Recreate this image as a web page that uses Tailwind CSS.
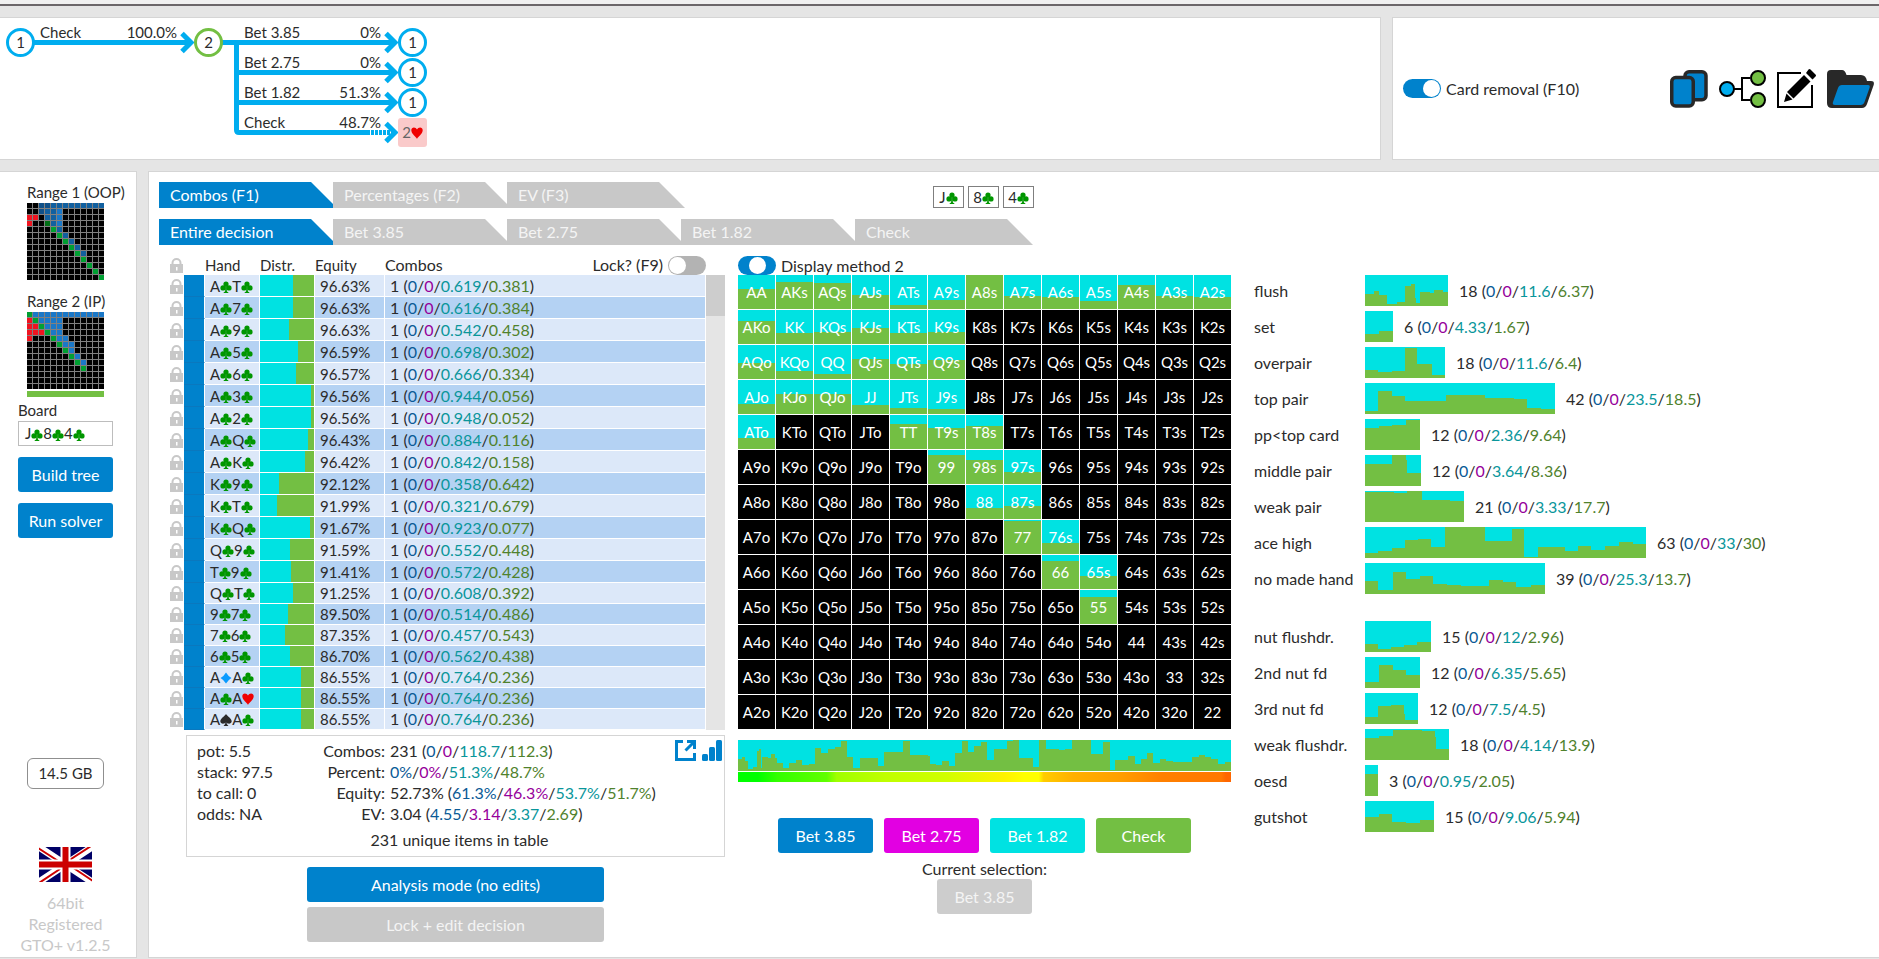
<!DOCTYPE html>
<html lang="en">
<head>
<meta charset="utf-8">
<title>GTO+</title>
<script src="https://cdn.jsdelivr.net/npm/@tailwindcss/browser@4"></script>
</head>
<body class="bg-[#e5e5e5] font-['Lato','Open_Sans',sans-serif] text-[16px] leading-[21px] text-[#2b2b2b]">
<svg class="hidden">
  <symbol id="c" viewBox="0 0 12 12"><g fill="#009600"><circle cx="6" cy="3" r="2.600"/><circle cx="3" cy="6.900" r="2.600"/><circle cx="9" cy="6.900" r="2.600"/><path d="M5.200 4h1.600v5.500c0 1 .6 1.600 1.600 1.900V12H3.600v-.6c1-.3 1.600-.9 1.600-1.900z"/></g></symbol>
  <symbol id="s" viewBox="0 0 12 12"><g fill="#2b2b2b"><path d="M6 0C7 2 11.700 4.500 11.700 7.200 11.700 10 7.800 10.400 6.600 8.500c0 1.500.6 2.500 1.600 2.900v.6H3.800v-.6c1-.4 1.600-1.400 1.600-2.900C4.200 10.400.3 10 .3 7.200.3 4.500 5 2 6 0z"/></g></symbol>
  <symbol id="h" viewBox="0 0 12 12"><path fill="#f00000" d="M6 12C5.200 9.500.3 7 .3 3.200.3-.3 4.800-.5 6 2.600 7.200-.5 11.700-.3 11.700 3.200 11.700 7 6.800 9.500 6 12z"/></symbol>
  <symbol id="d" viewBox="0 0 12 12"><path fill="#0a9bff" d="M6 .5Q8 4 11.500 6 8 8 6 11.500 4 8 .5 6 4 4 6 .5z"/></symbol>
  <symbol id="lock" viewBox="0 0 13 15"><path d="M2.500 7V5a4 4 0 0 1 8 0v2" fill="none" stroke="#c8c8c8" stroke-width="2"/><rect y="6" width="13" height="9" fill="#c8c8c8"/><path d="M6 9h1.500v3.500H6z" fill="#fff"/></symbol>
</svg>

<div class="flex min-h-screen flex-col">
  <div class="h-[6px] border-b-2 border-[#6b6669] bg-[#f0f0f0]"></div>

  <div class="mt-[11px] flex gap-[11px]">
    <section class="min-w-0 flex-1 border border-l-0 border-[#d5d5d5] bg-white" aria-label="Game tree">
      <svg width="440" height="141" viewBox="0 18 440 141" class="block text-[15px]" fill="#2b2b2b">
        <g fill="none" stroke="#00adef" stroke-width="5">
          <path d="M34 42.500H191M222 42.500H395M236.500 42.500V130q0 2.500 2.500 2.500H367M236.500 72.500H395M236.500 102.500H395"/>
          <path d="M367 132.500H395" stroke-dasharray="3 1"/>
          <path d="M182 33.500l9 9-9 9M386 33.500l9 9-9 9M386 63.500l9 9-9 9M386 93.500l9 9-9 9M386 123.500l9 9-9 9"/>
        </g>
        <g fill="#fff" stroke="#00adef" stroke-width="3">
          <circle cx="20.500" cy="42.500" r="13"/><circle cx="208.500" cy="42.500" r="13" stroke="#73bf43"/>
          <circle cx="412.500" cy="42.500" r="13"/><circle cx="412.500" cy="72.500" r="13"/><circle cx="412.500" cy="102.500" r="13"/>
        </g>
        <rect x="398" y="118" width="29" height="29" rx="3" fill="#facaca"/>
        <use href="#h" x="411" y="127" width="12" height="12"/>
        <g text-anchor="middle"><text x="20.500" y="48">1</text><text x="208.500" y="48">2</text><text x="412.500" y="48">1</text><text x="412.500" y="78">1</text><text x="412.500" y="108">1</text><text x="406.500" y="138" fill="#666">2</text></g>
        <text x="40" y="38">Check</text><text x="244" y="38">Bet 3.85</text><text x="244" y="68">Bet 2.75</text><text x="244" y="98">Bet 1.82</text><text x="244" y="128">Check</text>
        <g text-anchor="end"><text x="177" y="38">100.0%</text><text x="381" y="38">0%</text><text x="381" y="68">0%</text><text x="381" y="98">51.3%</text><text x="381" y="128">48.7%</text></g>
      </svg>
    </section>
    <section class="flex w-[487px] shrink-0 items-center border border-r-0 border-[#d5d5d5] bg-white pl-[10px]" aria-label="Tools">
      <label class="flex flex-1 items-center gap-[5px]"><input type="checkbox" checked class="flex h-[19px] w-[38px] appearance-none items-center justify-end rounded-full bg-[#0082cc] p-px before:size-[17px] before:rounded-full before:bg-white before:content-['']">Card removal (F10)</label>
      <div class="flex items-center gap-[11px] pr-[5px]">
        <button aria-label="Cards"><svg class="block" width="38" height="38" fill="#0082cc" stroke="#282828" stroke-width="3.500"><rect x="15" y="1.750" width="21" height="28" rx="4"/><rect x="1.750" y="7.500" width="21.500" height="28.500" rx="4"/></svg></button>
        <button aria-label="Tree"><svg class="block" width="47" height="38" fill="none" stroke="#000" stroke-width="2"><path d="M15 19h8M31 8H23v22h8"/><circle cx="8" cy="19" r="7" fill="#00adef"/><circle cx="39" cy="8" r="7" fill="#73bf43"/><circle cx="39" cy="30" r="7" fill="#73bf43"/></svg></button>
        <button aria-label="Edit"><svg class="block" width="39" height="39"><path d="M24 4H1v34h34V16" fill="none" stroke="#000" stroke-width="2"/><path d="M10 23L27 6l6.500 6.500-17 17zM29 4l2.500-3.500q1-1 2 0l5 5q1 1 0 2L35.500 10.500zM9.500 24.500l6 6L7 33z"/></svg></button>
        <button aria-label="Open"><svg class="block" width="47" height="38"><path d="M4 0h11q3 0 4.500 5H34q5 0 6 6h4q4 0 2.500 4.500L40 34q-1.500 4-5 4H5q-5 0-5-5V4q0-4 4-4z" fill="#282828"/><path d="M15 15h26q2.500 0 1.500 3l-5 14q-1 3-4 3H8q-3 0-2-3l5-14q1-3 4-3z" fill="#0082cc"/></svg></button>
      </div>
    </section>
  </div>

  <div class="mt-[11px] mb-px flex flex-1 gap-[11px]">
    <aside class="flex w-[137px] shrink-0 flex-col border border-l-0 border-[#d5d5d5] bg-white pt-[10px] pb-[2px]">
      <div class="pl-[27px] text-[15px] whitespace-nowrap">Range 1 (OOP)</div>
      <svg id="r1" class="ml-[27px]" width="77" height="77"></svg>
      <div class="mt-[11px] pl-[27px] text-[15px] whitespace-nowrap">Range 2 (IP)</div>
      <svg id="r2" class="ml-[27px]" width="77" height="77"></svg>
      <div class="mt-[2px] ml-[27px] h-[6px] w-[77px] bg-[#73bf43]"></div>
      <div class="mt-[3px] pl-[18px] text-[15px]">Board</div>
      <button id="board" class="ml-[18px] flex h-[25px] w-[95px] items-center border border-[#bdbdbd] bg-white pl-[6px] text-[15px]" aria-label="Board cards"></button>
      <button class="mt-[11px] ml-[18px] h-[35px] w-[95px] rounded-[3px] bg-[#0082cc] text-white">Build tree</button>
      <button class="mt-[11px] ml-[18px] h-[35px] w-[95px] rounded-[3px] bg-[#0082cc] text-white">Run solver</button>
      <div class="mt-auto mb-[58px] ml-[27px] flex h-[31px] w-[77px] items-center justify-center rounded-[6px] border border-[#8f8f8f] text-[15px]">14.5 GB</div>
      <svg class="ml-[39px]" width="53" height="35" viewBox="0 0 53 35"><rect width="53" height="35" fill="#006"/><path d="M0 0l53 35M53 0L0 35" stroke="#fff" stroke-width="7"/><path d="M-1 1l28 18M54 34L27 16M52-1L26 16M0 36l27-18" stroke="#c00" stroke-width="2"/><path d="M26.500 0v35M0 17.500h53" stroke="#fff" stroke-width="10"/><path d="M26.500 0v35M0 17.500h53" stroke="#c00" stroke-width="6"/></svg>
      <div class="mt-[10px] pr-[5px] text-center text-[#c8c8c8]">64bit<br>Registered<br>GTO+ v1.2.5</div>
    </aside>

    <main class="min-w-0 flex-1 border border-r-0 border-[#d5d5d5] bg-white pt-[10px] pl-[10px]">
      <div class="flex">
        <nav id="tabs1" class="flex"></nav>
        <div id="flop" class="ml-[252px] flex items-end gap-[4px] text-[15px]"></div>
      </div>
      <nav id="tabs2" class="mt-[11px] flex"></nav>

      <div class="mt-[10px] flex">
        <div class="w-[566px] shrink-0">
          <div class="flex">
            <table class="w-[547px] table-fixed border-separate border-spacing-0">
              <colgroup><col class="w-[25px]"><col class="w-[21px]"><col class="w-[55px]"><col class="w-[55px]"><col class="w-[70px]"><col></colgroup>
              <thead><tr class="h-[20px] text-left text-[15px] leading-[20px] [&>th]:p-0 [&>th]:font-normal">
                <th><svg class="ml-[11px]" width="13" height="15"><use href="#lock"/></svg></th><th></th><th>Hand</th><th>Distr.</th><th>Equity</th>
                <th><div class="flex items-center"><span class="flex-1 text-[16px]">Combos</span><label class="flex items-center gap-[5px] text-[16px]">Lock? (F9)<input type="checkbox" class="flex h-[19px] w-[38px] appearance-none items-center rounded-full bg-[#b3b3b3] p-px before:size-[17px] before:rounded-full before:bg-white before:content-['']"></label></div></th>
              </tr></thead>
              <tbody id="rows" class="leading-[20px] [&_td]:p-0"></tbody>
            </table>
            <div class="mt-[20px] flex-1 bg-[#e5e5e5]"><div class="h-[41px] bg-[#cdcdcd]"></div></div>
          </div>
          <section class="mt-[5px] ml-[27px] border border-[#d5d5d5] pt-[4px] pr-[2px] pb-[6px] pl-[10px]">
            <div class="flex">
              <div class="w-[100px]">pot: 5.5<br>stack: 97.5<br>to call: 0<br>odds: NA</div>
              <div class="w-[88px] text-right">Combos:<br>Percent:<br>Equity:<br>EV:</div>
              <div id="totals" class="flex-1 pl-[5px]"></div>
              <div class="flex gap-[6px]">
                <button class="self-start" aria-label="Pop out"><svg class="block" width="21" height="21" fill="none" stroke="#0082cc" stroke-width="3"><path d="M8 1.500H1.500v18h18V13M10.500 10.500L18 3M12 1.500h7.500V9"/></svg></button>
                <button class="self-start" aria-label="Chart"><svg class="block" width="20" height="21" fill="#0082cc"><rect y="14" width="6" height="7" rx="1.500"/><rect x="7" y="7" width="6" height="14" rx="1.500"/><rect x="14" width="6" height="21" rx="1.500"/></svg></button>
              </div>
            </div>
            <p class="mt-[5px] text-center">231 unique items in table</p>
          </section>
          <div class="mt-[10px] ml-[148px] flex w-[297px] flex-col gap-[5px]">
            <button class="h-[35px] rounded-[3px] bg-[#0082cc] text-white">Analysis mode (no edits)</button>
            <button class="h-[35px] rounded-[3px] bg-[#c8c8c8] text-[#f4f4f4]">Lock + edit decision</button>
          </div>
        </div>

        <div class="ml-[13px] w-[494px] shrink-0">
          <label class="flex h-[20px] items-center gap-[5px]"><input type="checkbox" checked class="flex h-[19px] w-[38px] appearance-none items-center justify-center rounded-full bg-[#0082cc] before:size-[17px] before:rounded-full before:bg-white before:content-['']">Display method 2</label>
          <table id="matrix" class="w-[494px] table-fixed border-separate border-spacing-0 text-center text-[15px] leading-[32px] text-white"></table>
          <svg id="strip" class="mt-[10px] block" width="493" height="31" viewBox="0 0 1479 93" preserveAspectRatio="none" shape-rendering="crispEdges"></svg>
          <div class="mt-px h-[10px] w-[493px] bg-[linear-gradient(90deg,#0f0_4%,#3f0_8%,#60ff00_18%,#a0ff00_20%,#c0ff00_30%,#d0ff00_42%,#fff200_54%,#ff0_58%,#ff0_61%,#ffcc00_62%,#ffb000_68%,#ffa000_77%,#ff8000_86%,#ff7800_98%,#f60_99%)]"></div>
          <div class="mt-[36px] mr-px flex justify-center gap-[11px] text-white">
            <button class="h-[35px] w-[95px] rounded-[3px] bg-[#0082cc]">Bet 3.85</button>
            <button class="h-[35px] w-[95px] rounded-[3px] bg-[#e200e2]">Bet 2.75</button>
            <button class="h-[35px] w-[95px] rounded-[3px] bg-[#00e2e2]">Bet 1.82</button>
            <button class="h-[35px] w-[95px] rounded-[3px] bg-[#73bf43]">Check</button>
          </div>
          <p class="mt-[5px] mr-px text-center">Current selection:</p>
          <div class="mr-px flex justify-center"><button class="h-[35px] w-[95px] rounded-[3px] bg-[#cdcdcd] text-[#f4f4f4]">Bet 3.85</button></div>
        </div>

        <div id="cats" class="ml-[22px] min-w-0 flex-1 pt-[20px]"></div>
      </div>
    </main>
  </div>
</div>

<script>
const $ = id => document.getElementById(id);
const cards = t => t.replace(/([AKQJT0-9])([cshd])/g, '$1<svg class="mt-[2px] inline-block shrink-0 align-[-1px]" width="12" height="12"><use href="#$2"/></svg>');
const CLS = ['text-[#0a5a96]', 'text-[#96009b]', 'text-[#0a969b]', 'text-[#50822d]'];
const split = v => v.split('/').map((n, i) => `<span class="${CLS[i]}">${n}</span>`).join('/');

const palette = {m:'#1160a0', n:'#0f5088', b:'#1a78c8', r:'#f01420', g:'#00a032', k:'#006e14', '.':'#000'};
const range = (id, rows) => {
  let s = '<rect width="77" height="77" fill="#808080"/>';
  rows.forEach((r, y) => [...r.padEnd(13, '.')].forEach((c, x) => s += `<rect x="${x*6}" y="${y*6}" width="5" height="5" fill="${palette[c]}"/>`));
  $(id).innerHTML = s;
};
range('r1', ['..nnmmmmmmmmm','..nmmb','rr.mmb','r..kmb','....gm','.....gm','......gm','.......gm','........gm','.........g','..........g','...........g','............g']);
range('r2', ['gbbbbbbbbbbbb','rgbbbb','rrgbbb','rrrgbb','r...gbb','.....gbb','......gb','.......gb','........gb','.........g','','','']);

$('board').innerHTML = cards('Jc8c4c');
$('flop').innerHTML = ['Jc','8c','4c'].map(c => `<div class="flex h-[22px] w-[31px] items-center justify-center border border-[#7f7f7f]">${cards(c)}</div>`).join('');

const tabs = (id, list) => $(id).innerHTML = list.map((t, i) => `<a href="#" class="mr-[-4px] flex h-[26px] w-[178px] items-center pb-px pl-[11px] [clip-path:polygon(0_0,152px_0,100%_100%,0_100%)] ${i ? 'bg-[#c8c8c8] text-[#f4f4f4]' : 'relative bg-[#0082cc] text-white'}">${t}</a>`).join('');
tabs('tabs1', ['Combos (F1)', 'Percentages (F2)', 'EV (F3)']);
tabs('tabs2', ['Entire decision', 'Bet 3.85', 'Bet 2.75', 'Bet 1.82', 'Check']);

const hands = `AcTc 96.63 .619 .381
Ac7c 96.63 .616 .384
Ac9c 96.63 .542 .458
Ac5c 96.59 .698 .302
Ac6c 96.57 .666 .334
Ac3c 96.56 .944 .056
Ac2c 96.56 .948 .052
AcQc 96.43 .884 .116
AcKc 96.42 .842 .158
Kc9c 92.12 .358 .642
KcTc 91.99 .321 .679
KcQc 91.67 .923 .077
Qc9c 91.59 .552 .448
Tc9c 91.41 .572 .428
QcTc 91.25 .608 .392
9c7c 89.50 .514 .486
7c6c 87.35 .457 .543
6c5c 86.70 .562 .438
AdAc 86.55 .764 .236
AcAh 86.55 .764 .236
AsAc 86.55 .764 .236`.split('\n').map(l => l.split(' '));
$('rows').innerHTML = hands.map(([h, e, a, b], i) => {
  const bg = (i % 2 ? 'bg-[#b4d2f3]' : 'bg-[#dce8f9]') + ' border-b border-r border-white';
  return `<tr class="${i < 14 ? 'h-[22px]' : 'h-[21px]'}">
  <td><svg class="ml-[11px] block" width="13" height="15"><use href="#lock"/></svg></td>
  <td class="border-r border-b border-r-white border-b-[#0a78be] bg-[#0082cc]"></td>
  <td class="${bg} text-[15px]"><div class="flex items-center pl-[5px]">${cards(h)}</div></td>
  <td class="border-r border-b border-white bg-clip-padding bg-no-repeat" style="background-image:linear-gradient(90deg,#00e2e2 ${a*100}%,#73bf43 ${a*100}%)"></td>
  <td class="${bg} text-[15px]"><div class="pl-[5px]">${e}%</div></td>
  <td class="${bg}"><div class="pl-[5px]">1 (${split(`0/0/0${a}/0${b}`)})</div></td></tr>`;
}).join('');

$('totals').innerHTML = `231 (${split('0/0/118.7/112.3')})<br>${split('0%/0%/51.3%/48.7%')}<br>52.73% (${split('61.3%/46.3%/53.7%/51.7%')})<br>3.04 (${split('4.55/3.14/3.37/2.69')})`;

const R = 'AKQJT98765432';
const fill = [[42,20,25,59,88,73,0,61,65,76,29,61,65],[32,68,64,52,68,64],[54,76,85,41,55,43],[70,40,40,75,81,86],[67,,,,25,37,31],[,,,,,15,28,65],[,,,,,,67,61],[,,,,,,,3,69],[,,,,,,,,18,62],[,,,,,,,,,21],[],[],[]];
$('matrix').innerHTML = fill.map((row, y) => '<tr class="h-[35px]">' + [...R].map((_, x) => {
  const name = x === y ? R[x] + R[x] : x > y ? R[y] + R[x] + 's' : R[x] + R[y] + 'o';
  const p = row[x];
  return `<td class="border-r border-b border-white bg-black bg-clip-padding bg-no-repeat p-0"${p === undefined ? '' : ` style="background-image:linear-gradient(#00e2e2 ${p}%,#73bf43 ${p}%)"`}>${name}</td>`;
}).join('') + '</tr>').join('');

const area = (w, steps) => {
  let x = 0, d = 'M0 93';
  steps.forEach(([nx, y]) => { d += `L${x} ${y}H${nx}`; x = nx; });
  return `<rect width="${w}" height="93" fill="#00e2e2"/><path fill="#73bf43" d="${d}V93z"/>`;
};
$('strip').innerHTML = area(1479, [[12,57],[20,50],[30,62],[46,87],[57,80],[63,33],[70,27],[73,84],[90,51],[98,54],[112,43],[118,55],[135,69],[153,85],[173,69],[192,60],[212,74],[232,72],[250,25],[270,38],[292,27],[310,21],[328,3],[346,51],[365,84],[420,54],[438,79],[496,37],[516,3],[570,45],[576,49],[595,73],[612,75],[632,62],[652,78],[672,38],[690,3],[708,36],[728,19],[748,7],[768,61],[808,27],[826,3],[843,0],[885,54],[904,81],[923,0],[963,27],[982,30],[1003,27],[1059,0],[1096,42],[1115,7],[1132,91],[1170,60],[1191,49],[1209,73],[1228,57],[1246,39],[1265,69],[1284,57],[1304,62],[1361,67],[1382,51],[1402,45],[1420,51],[1441,57],[1460,73],[1479,67]]);

const cats = [
['flush',83,'18','0/0/11.6/6.37',[[26,57],[40,49],[65,61],[92,87],[117,80],[133,32],[145,27],[149,70],[160,84],[188,51],[200,54],[226,44],[241,51]]],
['set',28,'6','0/0/4.33/1.67',[[40,69],[81,60]]],
['overpair',80,'18','0/0/11.6/6.4',[[38,69],[78,74],[117,72],[152,3],[194,51],[232,85]]],
['top pair',190,'42','0/0/23.5/18.5',[[39,85],[78,25],[117,39],[234,54],[350,36],[433,44],[470,49],[512,75],[552,79]]],
['pp&lt;top card',55,'12','0/0/2.36/9.64',[[40,26],[78,21],[120,18],[160,3]]],
['middle pair',56,'12','0/0/3.64/8.36',[[80,26],[118,0],[122,15],[163,54]]],
['weak pair',99,'21','0/0/3.33/17.7',[[85,2],[122,6],[165,0],[247,27],[287,30]]],
['ace high',281,'63','0/0/33/30',[[38,79],[77,73],[117,63],[153,39],[193,37],[233,61],[348,0],[427,43],[463,7],[503,91],[580,61],[618,73],[657,57],[696,69],[737,57],[777,45],[816,51]]],
['no made hand',180,'39','0/0/25.3/13.7',[[38,55],[80,81],[118,27],[160,49],[197,39],[238,63],[278,67],[360,69],[400,51],[440,57],[482,72],[523,67]]],
['nut flushdr.',66,'15','0/0/12/2.96',[[37,69],[75,84],[113,79],[152,73],[192,63]]],
['2nd nut fd',55,'12','0/0/6.35/5.65',[[40,75],[80,24],[120,38],[160,54]]],
['3rd nut fd',53,'12','0/0/7.5/4.5',[[38,73],[75,39],[113,37],[117,62],[154,81]]],
['weak flushdr.',84,'18','0/0/4.14/13.9',[[40,27],[80,20],[165,2],[203,7],[206,25],[244,60]]],
['oesd',13,'3','0/0/0.95/2.05',[[38,26]]],
['gutshot',69,'15','0/0/9.06/5.94',[[40,49],[78,39],[120,63],[160,67],[200,57]]]];
$('cats').innerHTML = cats.map(([n, w, t, v, s], i) => {
  const vw = s[s.length - 1][0];
  return `<div class="flex h-[31px] items-center ${i === 8 ? 'mb-[27px]' : 'mb-[5px]'}"><span class="w-[111px] shrink-0 whitespace-nowrap">${n}</span><svg class="mr-[11px] shrink-0" width="${w}" height="31" viewBox="0 0 ${vw} 93" preserveAspectRatio="none" shape-rendering="crispEdges">${area(vw, s)}</svg><span>${t} (${split(v)})</span></div>`;
}).join('');
</script>
</body>
</html>
